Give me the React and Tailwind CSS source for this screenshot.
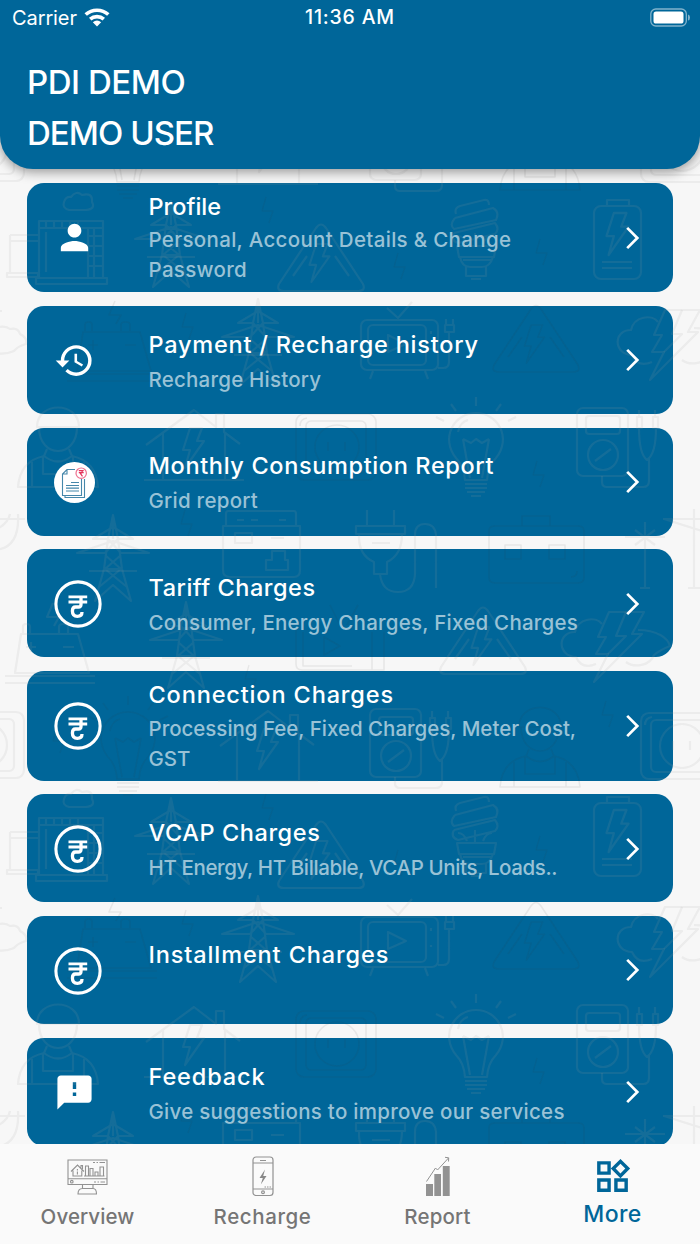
import React from "react";
import { MdPerson, MdHistory, MdFeedback, MdOutlineWidgets } from "react-icons/md";

const LIGHT = { stroke: "#a0a0a0", strokeOpacity: 0.125 };
const DARK = { stroke: "#303030", strokeOpacity: 0.08 };

const Bolt = ({ x, y }) => (
  <path {...DARK} strokeWidth="1.3" transform={`translate(${x} ${y})`} d="M-1-13 -5 1H6L2 13" />
);

const BigBolt = ({ x, y, s = 1 }) => (
  <path transform={`translate(${x} ${y}) scale(${s})`} d="M-3-20H9L4-7H11L-8 20 -3 2H-10Z" />
);

const Tower = ({ x, y }) => (
  <g transform={`translate(${x} ${y})`}>
    <path d="M0 0 -5 24 -9 54 -18 86 0 70 18 86 9 54 5 24ZM-5 24-20 24 0 12 20 24H5M-8 38H-36L0 26 36 38H8M-8 40 8 54-14 72M8 40-8 54 14 72M-5 24 8 38M5 24-8 38M-9 54H9M0 0V24" />
    <path d="M-24 56H24" />
  </g>
);

const Warn = ({ x, y }) => (
  <g transform={`translate(${x} ${y})`}>
    <path d="M-5 3Q0-4 5 3L42 59Q45 66 37 66H-37Q-45 66-42 59Z" />
    <path d="M-14 31-28 51M14 31 28 51" />
    <BigBolt x={-2} y={38} s={0.95} />
  </g>
);

const Battery = ({ x, y }) => (
  <g transform={`translate(${x} ${y})`}>
    <path d="M10 19H67L78 58H4ZM12 18V12Q12 9 15 9H16Q19 9 19 12V18M48 18V12Q48 9 52 9H53Q57 9 57 12V18M-6 61H84M-6 68H84M15 32H25M20 27V37M52 32H63" />
    <path d="M42-12 36 2H48L43 11" />
  </g>
);

const Bulb = ({ x, y }) => (
  <g transform={`translate(${x} ${y})`}>
    <path d="M-11 40Q-12 26-20 18C-36-2-22-27 0-27S36-2 20 18Q12 26 11 40ZM-13-1-6 38M13-1 6 38M-13-1-5 3 0-1 6 3 13-1M-18-8Q-16-18-8-20" />
    <path d="M-11 44H11M-11 48H11M-9 52H9M-5 56H5M0-43V-34M-25-36-20-29M25-36 20-29M-40-23-32-19M40-23 32-19" />
  </g>
);

const House = ({ x, y }) => (
  <g transform={`translate(${x} ${y})`}>
    <path d="M-48 35 0 0 22 17V4H30V22L46 34M-31 23V69M31 23V69M-50 70H50" />
    <BigBolt x={-1} y={38} s={1} />
  </g>
);

const Worker = ({ x, y }) => (
  <g transform={`translate(${x} ${y})`}>
    <path d="M-21 20C-21-6 21-6 21 20ZM-19 20C-19 52 19 52 19 20M-11 42-14 49Q-38 54-40 80H40Q38 54 14 49L11 42M-15 50V67H15V50M-26 55V80M26 55V80M-14 49Q0 60 14 49" />
  </g>
);

const Meter = ({ x, y }) => (
  <g transform={`translate(${x} ${y})`}>
    <rect width="51" height="68" rx="6" />
    <rect x="9" y="8" width="34" height="18" rx="3" />
    <circle cx="26" cy="47" r="15" />
    <path d="M18 53 34 41M25 68V74Q25 79 30 79H66Q72 79 72 73V51M60 9H65V20H60ZM76 9H81V20H76ZM62 2V9M78 2V9M62 20Q62 46 70 52Q79 46 79 20" />
  </g>
);

const Socket = ({ x, y }) => (
  <g transform={`translate(${x} ${y})`}>
    <rect width="80" height="66" rx="8" />
    <rect x="10" y="7" width="60" height="52" rx="5" />
    <circle cx="41" cy="33" r="22" />
    <path d="M32 28V37M49 28V37M4 12Q4 5 11 4" />
  </g>
);

const Storm = ({ x, y }) => (
  <g transform={`translate(${x} ${y})`}>
    <path d="M34 54Q20 60 14 47C-5 46-5 22 13 22C16 8 34 6 40 14M76 20C95 20 106 28 108 36Q98 40 92 45C88 56 72 58 64 52" />
    <path d="M47 2H82L70 24H80L32 72 46 44H34L44 27H36Z" />
    <path d="M64 2 54 26H64L46 44" />
  </g>
);

function Tile() {
  return (
    <g fill="none" strokeWidth="2.2" strokeLinejoin="round">
      <g {...LIGHT}>
        <path d="M69 210Q62 208 64 202T71 197Q76 190 82 195Q93 192 92 202Q96 209 86 210Z" />
        <path d="M39 221H103V278H39ZM39 228H103M46 232V272M88 228V278M94 228V278M36 278H107V284H36ZM10 235H38M10 235V273M10 241H38M7 273H38V277H7ZM46 221V228M54 221V228M62 221V228M70 221V228M78 221V228M88 236H103M88 246H103M88 256H103M88 266H103" />
        <g transform="translate(0 1)"><Tower x={171} y={200} /></g>
        <Warn x={321} y={225} />
        <path d="M456 214Q454 208 460 206L484 200Q489 199 489 205M455 218 493 208Q500 212 496 220L454 229Q449 225 455 218M454 233 495 223Q500 229 495 234L458 243Q450 240 454 233M457 246H496L494 257H459ZM463 260H491M466 267V276H486V267M471 279H481M475 246V233M467 244Q464 236 458 236M483 244Q486 236 492 236M460 257Q462 267 470 267H482Q490 267 493 257" />
        <rect x="594" y="206" width="47" height="73" rx="7" />
        <path d="M607 205V200H629V205M602 262H632M602 268H632" />
        <BigBolt x={617} y={234} s={1.05} />
        <path d="M-5 328Q5 325 10 329Q18 327 20 334Q28 338 26 344Q18 346 14 351Q5 355-5 353M-5 311H2" />
        <Tower x={258} y={299} />
        <rect x="361" y="320" width="77" height="50" rx="6" />
        <rect x="368" y="325" width="58" height="40" rx="5" />
        <path d="M388 335V352L406 344ZM387 308 398 318 412 302M373 371 370 379M425 371 428 379M431 331V334M431 348V350M445 325H454V332H445ZM446 319V325M453 319V325M449 332V362Q449 368 443 368H438" />
        <Storm x={618} y={308} />
        <Worker x={58} y={407} />
        <House x={194} y={410} />
        <Bulb x={476} y={440} />
        <Meter x={577} y={408} />
        <path d="M-5 519H25M18 514Q20 548-5 550M-5 530Q8 524 10 514" />
        <Tower x={113} y={515} />
        <path d="M228 511H294Q296 511 296 514V526H226V514Q226 511 228 511M223 526H300V570Q300 577 294 577H230Q223 577 223 570ZM235 533H252V543H235ZM271 538H284M237 520H244M251 520H258M279 520H286M272 551H285V560H288V570H266V560H272Z" />
        <path d="M367 510V526M394 510V526M356 526H405V534H356ZM359 534Q358 555 374 562V574H387V562Q402 555 402 534M372 543H390M380 574Q382 592 398 592T415 574V535Q415 524 425 524T436 535V588" />
        <path d="M663 519H705M694 509V588M664 519 705 532M625 537H665M645 522V588M635 530 655 545M655 530 635 545M640 588H650M688 588H700" />
        <Battery x={11} y={615} />
        <Tower x={186} y={602} />
        <Warn x={483} y={608} />
        <Storm x={562} y={610} />
        <Socket x={-56} y={712} />
        <House x={268} y={711} />
        <Meter x={370} y={709} />
        <Socket x={641} y={713} />
      </g>
      <g {...DARK} strokeWidth="1.6">
        <Battery x={73} y={313} />
        <Warn x={536} y={306} />
        <Socket x={296} y={414} />
        <path d="M489 531Q489 526 495 526H578Q584 526 584 531V577Q584 583 578 583H495Q489 583 489 577ZM522 526V516H550V526M505 545H521V559H505ZM549 545H565V559H549ZM571 577Q577 577 577 571" />
        <path d="M330 605 340 625M347 625 358 605M296 630V664Q296 670 302 670H384V632M303 632V666H352M324 637V655L340 646ZM372 632V670" />
        <Bulb x={128} y={739} />
        <Worker x={540} y={707} />
      </g>
      <Bolt x={267} y={210} />
      <Bolt x={399} y={266} />
      <Bolt x={541} y={252} />
      <Bolt x={187} y={326} />
      <Bolt x={538} y={474} />
      <Bolt x={186} y={523} />
      <Bolt x={250} y={678} />
      <Bolt x={607} y={714} />
      <Bolt x={58} y={740} />
    </g>
  );
}

function Backdrop() {
  return (
    <svg className="pointer-events-none absolute inset-0" width="700" height="1244" viewBox="0 0 700 1244">
      <g transform="translate(0 -597)"><Tile /></g>
      <Tile />
      <g transform="translate(0 597)"><Tile /></g>
    </svg>
  );
}

function RupeeIcon() {
  return (
    <svg width="48" height="48" viewBox="0 0 48 48" fill="none" stroke="white">
      <circle cx="24" cy="24" r="22.1" strokeWidth="3.1" />
      <path strokeWidth="2.8" d="M14.5 16.8H33.2M14.5 22H33.2" />
      <path strokeWidth="3.3" d="M27 16.5V24.5Q27 27 24.500 27H21.500Q18.400 27 18.400 31Q18.400 36.300 23.400 36.300Q28 36.300 28 32" />
    </svg>
  );
}

function ReportIcon() {
  return (
    <svg width="41" height="41" viewBox="0 0 41 41" fill="none">
      <circle cx="20.5" cy="20.5" r="20.5" fill="white" />
      <path stroke="#4587aa" strokeWidth="1.1" d="M21 7.5H13L8.5 12V33.5H27.500V17M8.500 12H13V7.500M11 33.500V35.500H30.500V17" />
      <path stroke="#4587aa" strokeWidth="1.2" d="M17 20.500H25M12 23.500H25M12 26.200H25M12 29H25" />
      <circle cx="27.200" cy="11.200" r="5.200" stroke="#ee7190" strokeWidth="1.200" fill="white" />
      <path stroke="#e3345c" strokeWidth="1.200" d="M24.800 8.700H29.700M24.800 10.700H29.700M26.500 8.500Q30 9.500 26.500 11.700L28.500 14.300" />
    </svg>
  );
}

const ITEMS = [
  { title: "Profile", sub: "Personal, Account Details & Change Password", icon: <MdPerson size={41} />, tall: true, titleTracking: "tracking-[0px]", subTracking: "tracking-[0.32px]" },
  { title: "Payment / Recharge history", sub: "Recharge History", icon: <MdHistory size={41} />, titleTracking: "tracking-[0.77px]", subTracking: "tracking-[0.22px]" },
  { title: "Monthly Consumption Report", sub: "Grid report", icon: <ReportIcon />, titleTracking: "tracking-[0.64px]", subTracking: "tracking-[0.26px]" },
  { title: "Tariff Charges", sub: "Consumer, Energy Charges, Fixed Charges", icon: <RupeeIcon />, titleTracking: "tracking-[0.52px]", subTracking: "tracking-[0.24px]" },
  { title: "Connection Charges", sub: "Processing Fee, Fixed Charges, Meter Cost, GST", icon: <RupeeIcon />, tall: true, titleTracking: "tracking-[0.86px]", subTracking: "tracking-[-0.02px]" },
  { title: "VCAP Charges", sub: "HT Energy, HT Billable, VCAP Units, Loads..", icon: <RupeeIcon />, titleTracking: "tracking-[0.58px]", subTracking: "tracking-[-0.38px]" },
  { title: "Installment Charges", sub: "", icon: <RupeeIcon />, titleTracking: "tracking-[0.88px]", subTracking: "tracking-[0px]" },
  { title: "Feedback", sub: "Give suggestions to improve our services", icon: <MdFeedback size={41} />, titleTracking: "tracking-[0.88px]", subTracking: "tracking-[0.28px]" },
];

function Card({ item }) {
  return (
    <div className={`flex shrink-0 rounded-[17px] bg-[#006699] pl-[27px] pr-[33px] ${item.tall ? "h-[109.5px]" : "h-[108px]"}`}>
      <div className="relative z-10 flex w-[94.5px] shrink-0 items-center pt-[1px] text-white">{item.icon}</div>
      <div className={`relative z-10 flex-1 ${item.tall ? "pt-[6px]" : "pt-[20.800px]"}`}>
        <div className={`whitespace-nowrap text-[23.500px] font-medium leading-[36px] text-white ${item.titleTracking}`}>{item.title}</div>
        <div className={`w-[446px] text-[20.500px] font-medium leading-[30.300px] text-[#99c2d6] ${item.subTracking} ${item.tall ? "mt-[0.500px]" : "mt-[1.900px]"}`}>{item.sub}</div>
      </div>
      <svg className="relative z-10 mt-[0.500px] self-center" width="14" height="24" viewBox="0 0 14 24" fill="none" stroke="white" strokeWidth="2.700">
        <path d="M1.200 1.900 11.300 12 1.200 22.100" />
      </svg>
    </div>
  );
}

function OverviewIcon() {
  return (
    <svg width="41" height="40" viewBox="0 0 41 40" fill="none" stroke="#929292" strokeWidth="1.100">
      <path d="M1 4H40V28.500H1ZM1 22.700H40M15.500 29V32.500H26V29M15.500 32.500Q11 32.500 11 38H29.500Q29.500 32.500 26 32.500M26 6.500H28M29.500 6.500H31M32.500 6.500H38M27 26H29M30.500 26H32M33.500 26H38M4 15.500 10.500 9 17 15.500M6 14.500V20H14.800V14.500M14 11.500V9.500H15.500V13M10.400 13V14.500M10.400 15.500V18.500M17 20H37.500M18.500 20V10H21.500V20M23 20V12.500H26V20M28 20V16H31V20M33 20V11H36.500V20" />
      <circle cx="4.800" cy="25.700" r="1.300" />
    </svg>
  );
}

function PhoneIcon() {
  return (
    <svg width="22" height="41" viewBox="0 0 22 41" fill="none" stroke="#929292" strokeWidth="1.200">
      <rect x="1" y="1" width="20" height="38.500" rx="3" />
      <path d="M1 7H21M1 33H21M8 4.500H14M12.500 31H14M15 31H16.500M17.500 31H19" />
      <circle cx="11" cy="36.200" r="1.400" />
      <path fill="#888" stroke="none" d="M13 13.500 7.500 22H10.800L8.800 28.500 14.500 20H11.200Z" />
    </svg>
  );
}

function BarsIcon() {
  return (
    <svg width="24" height="41" viewBox="0 0 24 41" fill="none">
      <path fill="#929292" d="M0 28H7V40H0ZM8.300 18H15V40H8.300ZM16.800 10H23.700V40H16.800Z" />
      <path stroke="#929292" strokeWidth="1" d="M.5 25.500 9.500 12 11.500 14 22.500 2M19 1.300 22.700 1.800 22.500 5.500" />
    </svg>
  );
}

function Tab({ icon, label, active, tracking = "" }) {
  return (
    <div className={`flex w-[175px] flex-col items-center ${active ? "text-[#006699]" : "text-[#757575]"}`}>
      <div className="mt-[11px] flex h-[42px] items-center">{icon}</div>
      <div className={`font-medium leading-[32px] ${active ? "mt-[1px] text-[23px]" : "mt-[3.500px] text-[20.500px]"} ${tracking}`}>{label}</div>
    </div>
  );
}

export default function App() {
  return (
    <div className="relative flex h-[1244px] w-[700px] flex-col overflow-hidden bg-[#f7f7f7] font-['Inter','Liberation_Sans',sans-serif]">
      <header className="relative z-20 h-[169px] shrink-0 rounded-b-[33px] bg-[#006699] text-white shadow-[0_3px_12px_rgba(0,0,0,0.4)]">
        <div className="grid h-[35px] grid-cols-3 items-center px-[12px] text-[20px]">
          <div className="flex items-center gap-[7px]">
            <span className="tracking-[-0.1px]">Carrier</span>
            <svg width="26" height="19" viewBox="0 0 26 19" fill="none" stroke="white" strokeWidth="3.600">
              <path d="M1.700 6.500C8 .8 18 .8 24.300 6.500M6.200 11.200C10 7.800 16 7.800 19.800 11.200" />
              <path fill="white" stroke="none" d="M8.800 14.300Q13 10.800 17.200 14.300L13 18.500Z" />
            </svg>
          </div>
          <span className="whitespace-nowrap pt-[1px] text-center text-[19.500px] font-medium tracking-[0.800px]">11:36 AM</span>
          <svg className="-mr-[3px] justify-self-end" width="41" height="20" viewBox="0 0 41 20" fill="none">
            <rect x=".8" y="1" width="35.500" height="17" rx="5" stroke="white" strokeOpacity=".5" strokeWidth="1.300" />
            <rect x="3.500" y="3.500" width="30" height="12" rx="2.600" fill="white" />
            <path fill="white" fillOpacity=".5" d="M38 6.500Q40 7 40 9.500T38 12.500Z" />
          </svg>
        </div>
        <div className="pl-[27px] pt-[22px] text-[33px] font-medium leading-[51px]">
          <div className="tracking-[-0.450px]">PDI DEMO</div>
          <div className="tracking-[-0.950px]">DEMO USER</div>
        </div>
      </header>
      <main className="flex min-h-0 flex-1 flex-col gap-[13.750px] overflow-hidden px-[27px] pt-[13.600px]">
        {ITEMS.map((item) => <Card key={item.title} item={item} />)}
      </main>
      <Backdrop />
      <nav className="relative z-20 flex h-[100px] shrink-0 bg-[#fafafa]">
        <Tab icon={<OverviewIcon />} label="Overview" tracking="tracking-[0.1px]" />
        <Tab icon={<PhoneIcon />} label="Recharge" tracking="tracking-[0.6px]" />
        <Tab icon={<BarsIcon />} label="Report" tracking="tracking-[0.15px]" />
        <Tab icon={<MdOutlineWidgets size={41} />} label="More" active tracking="tracking-[0.4px]" />
      </nav>
    </div>
  );
}
